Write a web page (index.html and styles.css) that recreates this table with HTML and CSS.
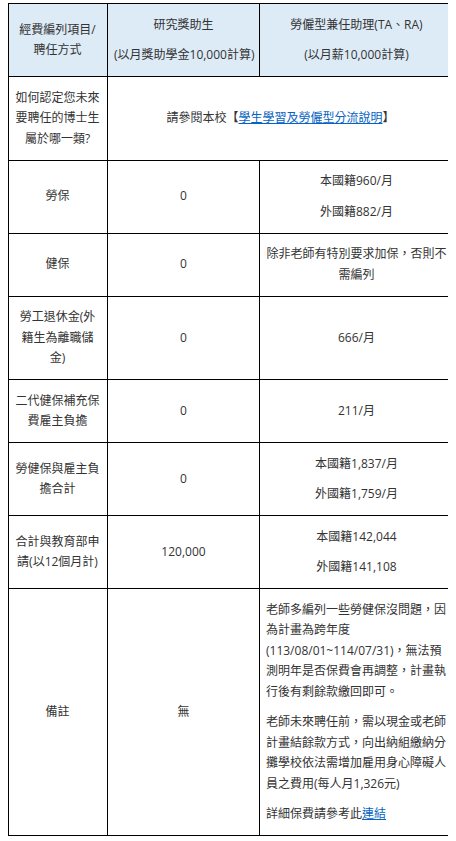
FILE: index.html
```html
<!DOCTYPE html>
<html lang="zh-Hant">
<head>
<meta charset="utf-8">
<title>經費編列</title>
<link rel="stylesheet" href="styles.css">
</head>
<body>
<table class="fee-table">
  <colgroup>
    <col class="c1">
    <col class="c2">
    <col class="c3">
  </colgroup>
  <thead>
    <tr>
      <th><p>經費編列項目/聘任方式</p></th>
      <th><p>研究獎助生</p><p class="nowrap">(以月獎助學金10,000計算)</p></th>
      <th><p>勞僱型兼任助理(TA、RA)</p><p>(以月薪10,000計算)</p></th>
    </tr>
  </thead>
  <tbody>
    <tr>
      <td><p>如何認定您未來要聘任的博士生屬於哪一類?</p></td>
      <td colspan="2"><p>請參閱本校【<a href="#">學生學習及勞僱型分流說明</a>】</p></td>
    </tr>
    <tr>
      <td><p>勞保</p></td>
      <td><p>0</p></td>
      <td><p>本國籍960/月</p><p>外國籍882/月</p></td>
    </tr>
    <tr>
      <td><p>健保</p></td>
      <td><p>0</p></td>
      <td><p>除非老師有特別要求加保，否則不需編列</p></td>
    </tr>
    <tr>
      <td><p>勞工退休金(外籍生為離職儲金)</p></td>
      <td><p>0</p></td>
      <td><p>666/月</p></td>
    </tr>
    <tr>
      <td><p>二代健保補充保費雇主負擔</p></td>
      <td><p>0</p></td>
      <td><p>211/月</p></td>
    </tr>
    <tr>
      <td><p>勞健保與雇主負擔合計</p></td>
      <td><p>0</p></td>
      <td><p>本國籍1,837/月</p><p>外國籍1,759/月</p></td>
    </tr>
    <tr>
      <td><p>合計與教育部申請(以12個月計)</p></td>
      <td><p>120,000</p></td>
      <td><p>本國籍142,044</p><p>外國籍141,108</p></td>
    </tr>
    <tr>
      <td><p>備註</p></td>
      <td><p>無</p></td>
      <td class="left">
        <p>老師多編列一些勞健保沒問題，因為計畫為跨年度(113/08/01~114/07/31)，無法預測明年是否保費會再調整，計畫執行後有剩餘款繳回即可。</p>
        <p>老師未來聘任前，需以現金或老師計畫結餘款方式，向出納組繳納分攤學校依法需增加雇用身心障礙人員之費用(每人月1,326元)</p>
        <p>詳細保費請參考此<a href="#">連結</a></p>
      </td>
    </tr>
  </tbody>
</table>
</body>
</html>
```

FILE: styles.css
```css
html, body {
  background: #ffffff;
}
body {
  margin: 3px 8px 8px 8px;
  font-family: "Open Sans", "Noto Sans CJK TC", sans-serif;
  font-size: 12px;
  line-height: 20.5px;
  color: #333333;
}
.fee-table {
  border-collapse: collapse;
  table-layout: fixed;
  width: 445px;
}
.c1 { width: 99px; }
.c2 { width: 152px; }
.c3 { width: 194px; }
.fee-table th,
.fee-table td {
  border: 1px solid #000000;
  padding: 10.5px 6px;
  text-align: center;
  vertical-align: middle;
  font-weight: normal;
}
.fee-table tr > :first-child {
  padding-right: 7px;
}
.fee-table th {
  background: #ddebf7;
}
.fee-table p {
  margin: 0 0 10px 0;
}
.fee-table p:last-child {
  margin-bottom: 0;
}
.fee-table p.nowrap {
  white-space: nowrap;
}
.fee-table td.left {
  text-align: left;
}
.fee-table a {
  color: #0563c1;
  text-decoration: underline;
}
```
